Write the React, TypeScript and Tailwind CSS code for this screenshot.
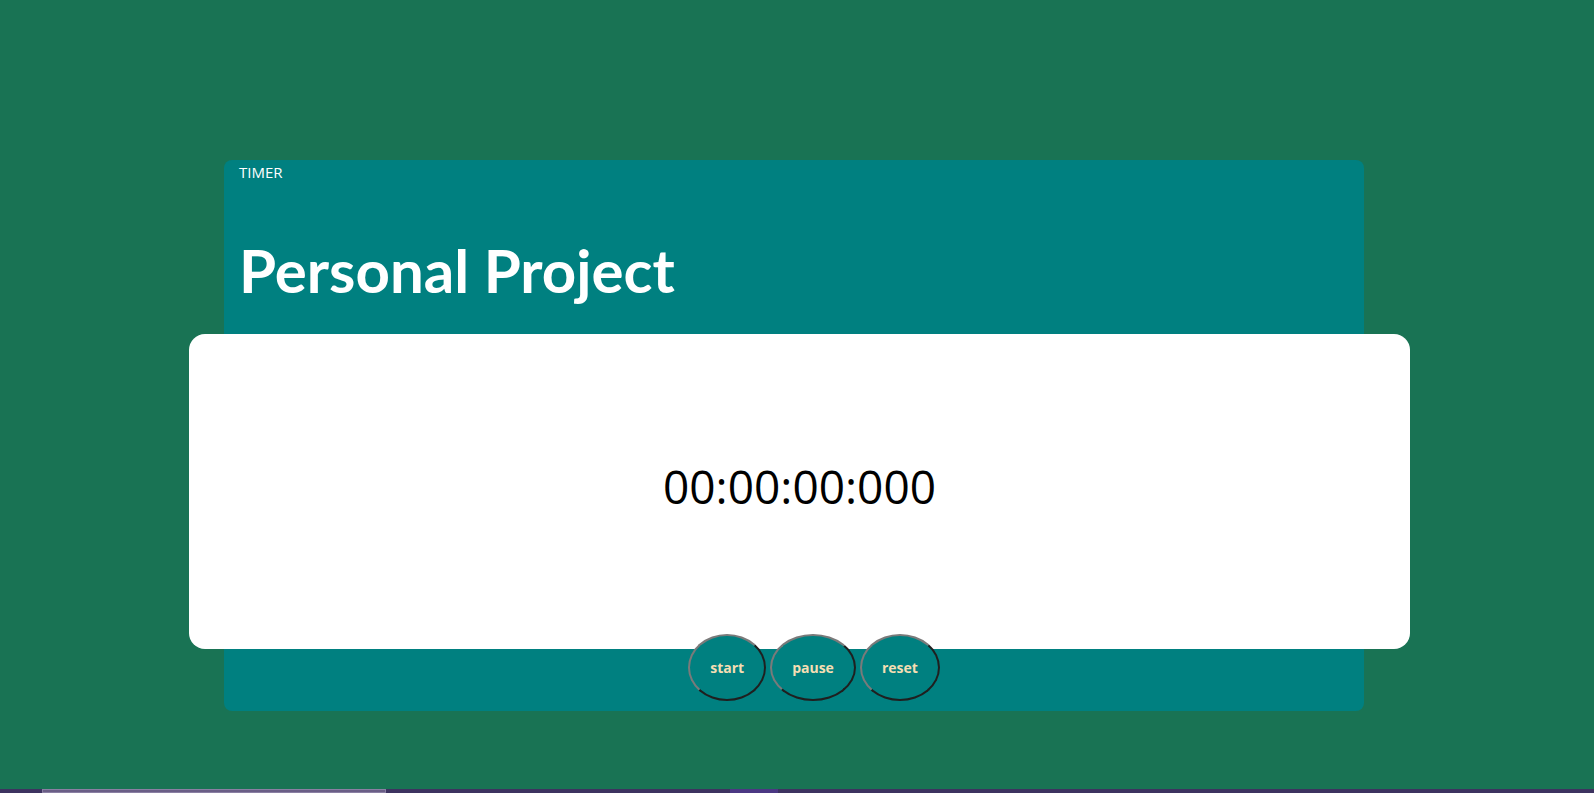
import React from "react";

const buttons = ["start", "pause", "reset"];

const TimerButton = ({ label }: { label: string }) => (
  <button
    className="rounded-[50%] border-2 border-t-[#7a7a7a] border-l-[#7a7a7a] border-r-[#1f1f1f] border-b-[#1f1f1f] bg-[#008080] px-[20px] py-[22px] text-[14px] font-bold leading-[19px] text-[#f5deb3]"
    style={{ borderStyle: "solid" }}
  >
    {label}
  </button>
);

export default function App() {
  return (
    <div
      className="flex h-[793px] w-full flex-col overflow-hidden bg-[#197354]"
      style={{ fontFamily: '"Open Sans", "Noto Sans", sans-serif' }}
    >
      <div className="flex-1 pl-[224px] pt-[160px]">
        <div className="flex w-[1140px] flex-col rounded-[8px] bg-[#008080] pb-[10px]">
          <div className="h-[174px] px-[15px] pt-[2px]">
            <p className="text-[15px] leading-[20px] text-white">TIMER</p>
            <h1
              className="mt-[48px] text-[60px] font-bold leading-[80px] text-white"
              style={{ fontFamily: 'Lato, "Open Sans", sans-serif' }}
            >
              Personal Project
            </h1>
          </div>
          <div className="ml-[-35px] flex h-[315px] w-[1221px] items-center justify-center rounded-[16px] bg-white pb-[12px]">
            <span className="text-[46px] leading-none text-black">00:00:00:000</span>
          </div>
          <div className="mt-[-15px] flex justify-center gap-[4px] pl-[40px]">
            {buttons.map((b) => (
              <TimerButton key={b} label={b} />
            ))}
          </div>
        </div>
      </div>
      <div className="flex h-[4px] w-full bg-[#3d3360]">
        <div className="ml-[42px] h-full w-[344px] border border-[#8a7fa3] bg-[#6a5e86]" />
        <div className="ml-[344px] h-full w-[48px] bg-[#4b3883]" />
      </div>
    </div>
  );
}
